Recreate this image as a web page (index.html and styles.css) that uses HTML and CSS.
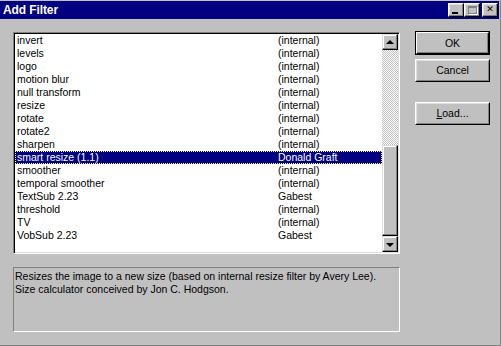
FILE: index.html
```html
<!DOCTYPE html>
<html>
<head>
<meta charset="utf-8">
<link rel="stylesheet" href="styles.css">
</head>
<body>
<div class="window">
  <div class="titlebar">
    <span class="title">Add Filter</span>
    <div class="tbtns">
      <div class="tbtn"><span class="g-min"></span></div>
      <div class="tbtn"><span class="g-max"></span></div>
      <div class="tbtn close"><span class="g-x">&#x2715;</span></div>
    </div>
  </div>
  <div class="content">
    <div class="leftcol">
      <div class="listbox">
        <div class="rows">
          <div class="row"><span class="c1">invert</span><span>(internal)</span></div>
          <div class="row"><span class="c1">levels</span><span>(internal)</span></div>
          <div class="row"><span class="c1">logo</span><span>(internal)</span></div>
          <div class="row"><span class="c1">motion blur</span><span>(internal)</span></div>
          <div class="row"><span class="c1">null transform</span><span>(internal)</span></div>
          <div class="row"><span class="c1">resize</span><span>(internal)</span></div>
          <div class="row"><span class="c1">rotate</span><span>(internal)</span></div>
          <div class="row"><span class="c1">rotate2</span><span>(internal)</span></div>
          <div class="row"><span class="c1">sharpen</span><span>(internal)</span></div>
          <div class="row sel"><span class="c1">smart resize (1.1)</span><span>Donald Graft</span></div>
          <div class="row"><span class="c1">smoother</span><span>(internal)</span></div>
          <div class="row"><span class="c1">temporal smoother</span><span>(internal)</span></div>
          <div class="row"><span class="c1">TextSub 2.23</span><span>Gabest</span></div>
          <div class="row"><span class="c1">threshold</span><span>(internal)</span></div>
          <div class="row"><span class="c1">TV</span><span>(internal)</span></div>
          <div class="row"><span class="c1">VobSub 2.23</span><span>Gabest</span></div>
        </div>
        <div class="vscroll">
          <div class="sbtn"><span class="arr-up"></span></div>
          <div class="track"></div>
          <div class="thumb"></div>
          <div class="sbtn"><span class="arr-down"></span></div>
        </div>
      </div>
      <div class="desc">Resizes the image to a new size (based on internal resize filter by Avery Lee).<br>Size calculator conceived by Jon C. Hodgson.</div>
    </div>
    <div class="rightcol">
      <div class="btn default"><div class="btn-in">OK</div></div>
      <div class="btn"><div class="btn-in">Cancel</div></div>
      <div class="btn load"><div class="btn-in"><u>L</u>oad...</div></div>
    </div>
  </div>
</div>
</body>
</html>
```

FILE: styles.css
```css
* { box-sizing: border-box; }
html, body { margin: 0; padding: 0; background: #c0c0c0; }
body {
  font-family: "Liberation Sans", Arial, sans-serif;
  font-size: 10.5px;
  color: #000;
}
.window {
  width: 501px;
  height: 346px;
  background: #c0c0c0;
  border-top: 1px solid #c0c0c0;
  border-right: 1px solid #808080;
  border-bottom: 1px solid #808080;
  display: flex;
  flex-direction: column;
}
.titlebar {
  height: 18px;
  margin-right: 1px;
  background: #000080;
  color: #fff;
  display: flex;
  align-items: center;
  justify-content: space-between;
  padding: 0 1px 0 3px;
}
.title {
  font-weight: bold;
  font-size: 12px;
  letter-spacing: -0.1px;
}
.tbtns { display: flex; gap: 0; }
.tbtn {
  width: 16px;
  height: 14px;
  background: #c0c0c0;
  border-top: 1px solid #fff;
  border-left: 1px solid #fff;
  border-right: 1px solid #000;
  border-bottom: 1px solid #000;
  box-shadow: inset -1px -1px 0 #808080, inset 1px 1px 0 #dfdfdf;
  position: relative;
  display: flex;
  align-items: center;
  justify-content: center;
}
.tbtn.close { margin-left: 2px; }
.g-min {
  position: absolute;
  left: 3px;
  top: 8px;
  width: 6px;
  height: 2px;
  background: #000;
}
.g-max {
  position: absolute;
  left: 3px;
  top: 2px;
  width: 9px;
  height: 8px;
  border: 1px solid #808080;
  border-top-width: 2px;
  box-shadow: 1px 1px 0 #fff;
}
.g-x {
  color: #000;
  font-family: "DejaVu Sans", sans-serif;
  font-size: 9px;
  font-weight: bold;
  line-height: 1;
  margin-top: -1px;
}
.content {
  display: flex;
  padding: 13px 0 0 13px;
}
.leftcol {
  width: 387px;
  display: flex;
  flex-direction: column;
  gap: 13px;
}
.listbox {
  height: 222px;
  border-top: 1px solid #808080;
  border-left: 1px solid #808080;
  border-right: 1px solid #fff;
  border-bottom: 1px solid #fff;
  box-shadow: inset 1px 1px 0 #000, inset -1px -1px 0 #dfdfdf;
  background: #fff;
  padding: 1px;
  display: flex;
}
.rows {
  flex: 1;
  display: flex;
  flex-direction: column;
}
.row {
  height: 13px;
  line-height: 13px;
  display: flex;
  padding-left: 2px;
  white-space: nowrap;
}
.c1 { width: 261px; }
.row.sel {
  background: #000080;
  color: #fff;
  outline: 1px dotted #ffff80;
  outline-offset: -1px;
}
.vscroll {
  width: 16px;
  display: flex;
  flex-direction: column;
}
.sbtn {
  width: 16px;
  height: 16px;
  background: #c0c0c0;
  border-top: 1px solid #dfdfdf;
  border-left: 1px solid #dfdfdf;
  border-right: 1px solid #000;
  border-bottom: 1px solid #000;
  box-shadow: inset -1px -1px 0 #808080, inset 1px 1px 0 #fff;
  display: flex;
  align-items: center;
  justify-content: center;
}
.arr-up {
  width: 0; height: 0;
  border-left: 4px solid transparent;
  border-right: 4px solid transparent;
  border-bottom: 4px solid #000;
}
.arr-down {
  width: 0; height: 0;
  border-left: 4px solid transparent;
  border-right: 4px solid transparent;
  border-top: 4px solid #000;
  margin-top: 1px;
}
.track {
  height: 95px;
  background: repeating-conic-gradient(#fff 0 25%, #c0c0c0 0 50%) 0 0 / 2px 2px;
}
.thumb {
  flex: 1;
  background: #c0c0c0;
  border-top: 1px solid #dfdfdf;
  border-left: 1px solid #dfdfdf;
  border-right: 1px solid #000;
  border-bottom: 1px solid #000;
  box-shadow: inset -1px -1px 0 #808080, inset 1px 1px 0 #fff;
}
.desc {
  height: 65px;
  border-top: 1px solid #808080;
  border-left: 1px solid #808080;
  border-right: 1px solid #fff;
  border-bottom: 1px solid #fff;
  padding: 2px 0 0 1px;
  line-height: 13px;
}
.rightcol {
  margin-left: 15px;
  margin-top: -1px;
  display: flex;
  flex-direction: column;
  gap: 4px;
}
.btn {
  width: 75px;
  height: 23px;
  background: #c0c0c0;
  border-top: 1px solid #fff;
  border-left: 1px solid #fff;
  border-right: 1px solid #000;
  border-bottom: 1px solid #000;
}
.btn-in {
  width: 100%;
  height: 100%;
  border-right: 1px solid #808080;
  border-bottom: 1px solid #808080;
  border-top: 1px solid #dfdfdf;
  border-left: 1px solid #dfdfdf;
  display: flex;
  align-items: center;
  justify-content: center;
  line-height: 13px;
}
.btn.default {
  height: 24px;
  border: 1px solid #000;
}
.btn.default .btn-in {
  border-color: #fff #000 #000 #fff;
  box-shadow: inset -1px -1px 0 #808080;
}
.btn.load { margin-top: 16px; }
u { text-decoration: underline; }
```
